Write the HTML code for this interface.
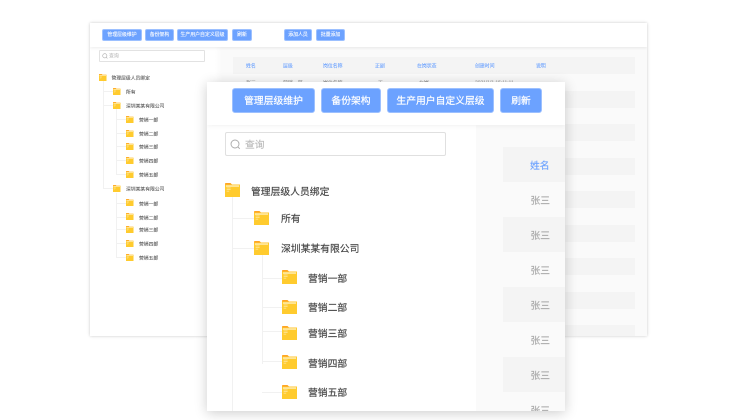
<!DOCTYPE html>
<html lang="zh">
<head>
<meta charset="utf-8">
<style>
html,body{margin:0;padding:0;background:#fff}
body{width:736px;height:420px;overflow:hidden;position:relative;font-family:"Liberation Sans","Noto Sans CJK SC",sans-serif}
#wrap{position:absolute;left:0;top:0;width:736px;height:420px;filter:blur(.35px)}
.a{position:absolute}
.card{position:absolute;background:#fff;overflow:hidden}
#back{left:90px;top:23px;width:557px;height:313px;box-shadow:0 0 3px rgba(0,0,0,.22)}
#front{left:207px;top:82px;width:358px;height:329px;box-shadow:0 2px 12px rgba(0,0,0,.2)}
#back .t,#back .b{-webkit-text-stroke:.08px currentColor}
#front .t{-webkit-text-stroke:.15px currentColor}
#front .b{-webkit-text-stroke:.2px #fff}
.b{position:absolute;background:#6ca2ff;color:#fff;border:.5px solid #9cc0ff;box-sizing:border-box;border-radius:2px;text-align:center;white-space:nowrap}
.t{position:absolute;white-space:nowrap;transform:translateY(-50%)}
.s{position:absolute;background:#f4f4f4}
.l{position:absolute;background:#f1f1f1}
svg.f{position:absolute;overflow:visible}
</style>
</head>
<body>
<svg width="0" height="0" style="position:absolute">
<defs>
<symbol id="fd" viewBox="0 0 15 14">
<path d="M0 0.8Q0 0 .8 0H5.5L7 1.5H15V14H0Z" fill="#ffa426"/>
<rect x="0" y="1.6" width="15" height="12.4" fill="#ffcb2e"/>
<rect x="1" y="2.4" width="13" height="1.3" fill="#fff0c4"/>
<rect x="1.6" y="4.6" width="4" height=".7" fill="#ffe9a8"/>
<rect x="1.6" y="6.2" width="4" height=".7" fill="#ffe9a8"/>
<rect x="1.6" y="7.8" width="2.6" height=".7" fill="#ffe9a8"/>
</symbol>
</defs>
</svg>
<div id="wrap">
<div id="back" class="card">
  <div class="a" style="left:0;top:24px;width:557px;height:289px;background:linear-gradient(90deg,#fff 0,#fff 125px,#fafafa 132px)"></div>
  <div class="a" style="left:0;top:0;width:557px;height:24px;background:#fff;box-shadow:0 1px 3px rgba(0,0,0,.08)"></div>

  <div class="b" style="left:12px;top:6px;width:40px;height:12px;font-size:4.9px;line-height:12.5px">管理层级维护</div>
  <div class="b" style="left:55px;top:6px;width:29px;height:12px;font-size:4.9px;line-height:12.5px">备份架构</div>
  <div class="b" style="left:87px;top:6px;width:51px;height:12px;font-size:4.9px;line-height:12.5px">生产用户自定义层级</div>
  <div class="b" style="left:142px;top:6px;width:20px;height:12px;font-size:4.9px;line-height:12.5px">刷新</div>
  <div class="b" style="left:194px;top:6px;width:28px;height:12px;font-size:4.9px;line-height:12.5px">添加人员</div>
  <div class="b" style="left:226px;top:6px;width:29px;height:12px;font-size:4.9px;line-height:12.5px">批量添加</div>

  <div class="a" style="left:9px;top:27px;width:106px;height:12px;border:.5px solid #e2e2e2;box-sizing:border-box;border-radius:1px;background:#fff"></div>
  <svg class="a" style="left:12px;top:30px" width="6" height="6" viewBox="0 0 6 6"><circle cx="2.8" cy="2.8" r="2.1" fill="none" stroke="#aaa" stroke-width=".6"/><path d="M4.4 4.4L5.4 5.4" stroke="#aaa" stroke-width=".6"/></svg>
  <div class="t" style="left:19px;top:33px;font-size:4.9px;color:#bbb">查询</div>

  <div class="s" style="left:143px;top:34px;width:402px;height:17px"></div>
  <div class="s" style="left:143px;top:68px;width:402px;height:17px"></div>
  <div class="s" style="left:143px;top:101px;width:402px;height:17px"></div>
  <div class="s" style="left:143px;top:135px;width:402px;height:17px"></div>
  <div class="s" style="left:143px;top:168px;width:402px;height:17px"></div>
  <div class="s" style="left:143px;top:202px;width:402px;height:17px"></div>
  <div class="s" style="left:143px;top:235px;width:402px;height:17px"></div>
  <div class="s" style="left:143px;top:269px;width:402px;height:17px"></div>
  <div class="s" style="left:143px;top:302px;width:402px;height:11px"></div>

  <div style="color:#6ca2ff;font-size:4.9px">
    <div class="t" style="left:156px;top:43px">姓名</div>
    <div class="t" style="left:193px;top:43px">层级</div>
    <div class="t" style="left:233px;top:43px">岗位名称</div>
    <div class="t" style="left:285px;top:43px">正副</div>
    <div class="t" style="left:327px;top:43px">在岗状态</div>
    <div class="t" style="left:385px;top:43px">创建时间</div>
    <div class="t" style="left:446px;top:43px">说明</div>
  </div>
  <div style="color:#999;font-size:4.9px">
    <div class="t" style="left:156px;top:60px">张三</div>
    <div class="t" style="left:193px;top:60px">营销一部</div>
    <div class="t" style="left:233px;top:60px">岗位名称</div>
    <div class="t" style="left:288px;top:60px">正</div>
    <div class="t" style="left:329px;top:60px">在岗</div>
    <div class="t" style="left:385px;top:60px">2021/1/1 15:11:11</div>
  </div>

  <div class="l" style="left:12.5px;top:58px;width:.7px;height:108px"></div>
  <div class="l" style="left:12.5px;top:68px;width:11px;height:.7px"></div>
  <div class="l" style="left:12.5px;top:82px;width:11px;height:.7px"></div>
  <div class="l" style="left:12.5px;top:165px;width:11px;height:.7px"></div>
  <div class="l" style="left:26px;top:86px;width:.7px;height:66px"></div>
  <div class="l" style="left:26px;top:170px;width:.7px;height:65px"></div>
  <div class="l" style="left:26px;top:96px;width:10px;height:.7px"></div>
  <div class="l" style="left:26px;top:110px;width:10px;height:.7px"></div>
  <div class="l" style="left:26px;top:123px;width:10px;height:.7px"></div>
  <div class="l" style="left:26px;top:137px;width:10px;height:.7px"></div>
  <div class="l" style="left:26px;top:151px;width:10px;height:.7px"></div>
  <div class="l" style="left:26px;top:180px;width:10px;height:.7px"></div>
  <div class="l" style="left:26px;top:194px;width:10px;height:.7px"></div>
  <div class="l" style="left:26px;top:206px;width:10px;height:.7px"></div>
  <div class="l" style="left:26px;top:220px;width:10px;height:.7px"></div>
  <div class="l" style="left:26px;top:234px;width:10px;height:.7px"></div>

  <svg class="f" style="left:9px;top:51px" width="7.5" height="7"><use href="#fd"/></svg>
  <svg class="f" style="left:23px;top:65px" width="7.5" height="7"><use href="#fd"/></svg>
  <svg class="f" style="left:23px;top:79px" width="7.5" height="7"><use href="#fd"/></svg>
  <svg class="f" style="left:36px;top:93px" width="7.5" height="7"><use href="#fd"/></svg>
  <svg class="f" style="left:36px;top:107px" width="7.5" height="7"><use href="#fd"/></svg>
  <svg class="f" style="left:36px;top:120px" width="7.5" height="7"><use href="#fd"/></svg>
  <svg class="f" style="left:36px;top:134px" width="7.5" height="7"><use href="#fd"/></svg>
  <svg class="f" style="left:36px;top:148px" width="7.5" height="7"><use href="#fd"/></svg>
  <svg class="f" style="left:23px;top:162px" width="7.5" height="7"><use href="#fd"/></svg>
  <svg class="f" style="left:36px;top:176px" width="7.5" height="7"><use href="#fd"/></svg>
  <svg class="f" style="left:36px;top:190px" width="7.5" height="7"><use href="#fd"/></svg>
  <svg class="f" style="left:36px;top:203px" width="7.5" height="7"><use href="#fd"/></svg>
  <svg class="f" style="left:36px;top:217px" width="7.5" height="7"><use href="#fd"/></svg>
  <svg class="f" style="left:36px;top:231px" width="7.5" height="7"><use href="#fd"/></svg>

  <div style="color:#555;font-size:4.8px">
    <div class="t" style="left:21.5px;top:55px">管理层级人员绑定</div>
    <div class="t" style="left:36px;top:68.5px">所有</div>
    <div class="t" style="left:36px;top:82.5px">深圳某某有限公司</div>
    <div class="t" style="left:49px;top:97px">营销一部</div>
    <div class="t" style="left:49px;top:111px">营销二部</div>
    <div class="t" style="left:49px;top:124px">营销三部</div>
    <div class="t" style="left:49px;top:138px">营销四部</div>
    <div class="t" style="left:49px;top:152px">营销五部</div>
    <div class="t" style="left:36px;top:166px">深圳某某有限公司</div>
    <div class="t" style="left:49px;top:180.5px">营销一部</div>
    <div class="t" style="left:49px;top:194.5px">营销二部</div>
    <div class="t" style="left:49px;top:207px">营销三部</div>
    <div class="t" style="left:49px;top:221px">营销四部</div>
    <div class="t" style="left:49px;top:235px">营销五部</div>
  </div>
</div>

<div id="front" class="card">
  <div class="a" style="left:269px;top:43px;width:89px;height:286px;background:#fafafa"></div>
  <div class="a" style="left:0;top:0;width:358px;height:43px;background:#fff;box-shadow:0 1px 5px rgba(0,0,0,.06)"></div>

  <div class="b" style="left:25px;top:6px;width:83px;height:25px;font-size:9.8px;line-height:26.5px;border-radius:3px">管理层级维护</div>
  <div class="b" style="left:114px;top:6px;width:60px;height:25px;font-size:9.8px;line-height:26.5px;border-radius:3px">备份架构</div>
  <div class="b" style="left:180px;top:6px;width:107px;height:25px;font-size:9.8px;line-height:26.5px;border-radius:3px">生产用户自定义层级</div>
  <div class="b" style="left:293px;top:6px;width:42px;height:25px;font-size:9.8px;line-height:26.5px;border-radius:3px">刷新</div>

  <div class="a" style="left:18px;top:49.5px;width:221px;height:24.5px;border:.8px solid #e0e0e0;box-sizing:border-box;border-radius:2px;background:#fff"></div>
  <svg class="a" style="left:23px;top:57px" width="11" height="11" viewBox="0 0 11 11"><circle cx="5" cy="5" r="4" fill="none" stroke="#aaa" stroke-width=".9"/><path d="M8 8L9.8 9.8" stroke="#aaa" stroke-width=".9"/></svg>
  <div class="t" style="left:38px;top:62px;font-size:9.8px;color:#bbb">查询</div>

  <div class="s" style="left:296px;top:65px;width:62px;height:35px"></div>
  <div class="s" style="left:296px;top:135px;width:62px;height:35px"></div>
  <div class="s" style="left:296px;top:205px;width:62px;height:35px"></div>
  <div class="s" style="left:296px;top:275px;width:62px;height:35px"></div>

  <div class="t" style="left:323px;top:83px;font-size:9.8px;color:#6ca2ff">姓名</div>
  <div style="color:#aaa;font-size:9.8px">
    <div class="t" style="left:323.5px;top:118px">张三</div>
    <div class="t" style="left:323.5px;top:153px">张三</div>
    <div class="t" style="left:323.5px;top:188px">张三</div>
    <div class="t" style="left:323.5px;top:223px">张三</div>
    <div class="t" style="left:323.5px;top:258px">张三</div>
    <div class="t" style="left:323.5px;top:293px">张三</div>
    <div class="t" style="left:323.5px;top:328px">张三</div>
  </div>

  <div class="l" style="left:25px;top:115px;width:1px;height:214px"></div>
  <div class="l" style="left:25px;top:135.5px;width:22px;height:1px"></div>
  <div class="l" style="left:25px;top:166px;width:22px;height:1px"></div>
  <div class="l" style="left:54.5px;top:171px;width:1px;height:111px"></div>
  <div class="l" style="left:54.5px;top:195.5px;width:20px;height:1px"></div>
  <div class="l" style="left:54.5px;top:225px;width:20px;height:1px"></div>
  <div class="l" style="left:54.5px;top:249px;width:20px;height:1px"></div>
  <div class="l" style="left:54.5px;top:279px;width:20px;height:1px"></div>
  <div class="l" style="left:54.5px;top:310px;width:20px;height:1px"></div>

  <svg class="f" style="left:18px;top:101px" width="15" height="14"><use href="#fd"/></svg>
  <svg class="f" style="left:47px;top:129px" width="15" height="14"><use href="#fd"/></svg>
  <svg class="f" style="left:47px;top:158.5px" width="15" height="14"><use href="#fd"/></svg>
  <svg class="f" style="left:74.5px;top:188px" width="15" height="14"><use href="#fd"/></svg>
  <svg class="f" style="left:74.5px;top:217.5px" width="15" height="14"><use href="#fd"/></svg>
  <svg class="f" style="left:74.5px;top:243.5px" width="15" height="14"><use href="#fd"/></svg>
  <svg class="f" style="left:74.5px;top:273px" width="15" height="14"><use href="#fd"/></svg>
  <svg class="f" style="left:74.5px;top:302.5px" width="15" height="14"><use href="#fd"/></svg>

  <div style="color:#444;font-size:9.8px">
    <div class="t" style="left:44px;top:108.5px">管理层级人员绑定</div>
    <div class="t" style="left:74px;top:136px">所有</div>
    <div class="t" style="left:74px;top:166px">深圳某某有限公司</div>
    <div class="t" style="left:101px;top:195.5px">营销一部</div>
    <div class="t" style="left:101px;top:225px">营销二部</div>
    <div class="t" style="left:101px;top:251px">营销三部</div>
    <div class="t" style="left:101px;top:280.5px">营销四部</div>
    <div class="t" style="left:101px;top:310px">营销五部</div>
  </div>
</div>
</div>
</body>
</html>
